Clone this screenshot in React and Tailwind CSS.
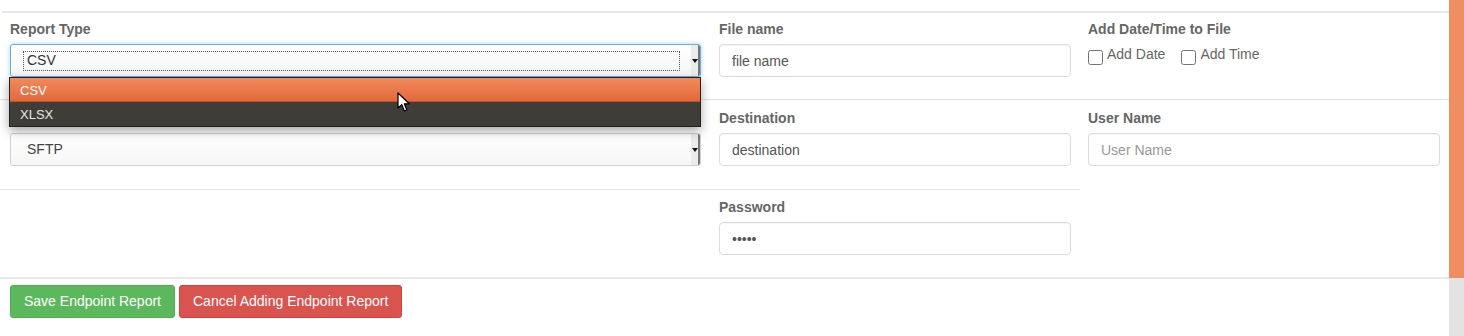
import { useState } from 'react'

function Label({ children }) {
  return <div className="h-5 mb-[5px] text-[14px] leading-5 font-bold text-[#666]">{children}</div>
}

function TextInput({ value, placeholder, type = 'text' }) {
  return (
    <input
      type={type}
      defaultValue={value}
      placeholder={placeholder}
      className="w-full h-[33px] px-3 rounded border border-[#dcdcdc] bg-white text-[14px] text-[#555] placeholder:text-[#999] outline-none shadow-[inset_0_1px_1px_rgba(0,0,0,0.04)]"
    />
  )
}

function Arrow() {
  return <div className="w-0 h-0 border-l-[3px] border-r-[3px] border-t-[4px] border-l-transparent border-r-transparent border-t-[#111]" />
}

function FakeSelect({ value, focused, children }) {
  return (
    <div
      className={
        'relative h-[33px] flex items-center rounded-[3px] bg-gradient-to-b from-white to-[#f6f6f6] ' +
        (focused
          ? 'border border-[#66afe9] shadow-[0_0_4px_rgba(102,175,233,0.6)]'
          : 'border border-[#d0d0d0]')
      }
    >
      {focused ? (
        <div className="ml-3 flex-1 mr-[20px] h-[20px] border border-dotted border-[#555] flex items-center pl-[3px] text-[14px] text-[#333]">
          {value}
        </div>
      ) : (
        <div className="ml-4 flex-1 text-[14px] text-[#444]">{value}</div>
      )}
      <div className="absolute right-0 top-0 bottom-0 w-[9px] flex items-center justify-center border-r-2 border-[#777] bg-[#ececec] rounded-r-[2px]">
        <Arrow />
      </div>
      {children}
    </div>
  )
}

function Cursor() {
  return (
    <svg className="absolute z-30 left-[397px] top-[92px]" width="14" height="21" viewBox="0 0 14 21">
      <path d="M1 1 L1 16 L4.8 12.6 L7.3 19 L9.8 18 L7.3 11.8 L12.3 11.8 Z" fill="#fff" stroke="#000" strokeWidth="1.2" strokeLinejoin="round" />
    </svg>
  )
}

export default function App() {
  const [addDate, setAddDate] = useState(false)
  const [addTime, setAddTime] = useState(false)

  return (
    <div className="relative flex w-full h-[336px] bg-white overflow-hidden" style={{ fontFamily: '"Liberation Sans", Arial, sans-serif' }}>
      <div className="flex-1 flex flex-col">
        <div className="h-[11px]" />
        <div className="ml-[2px] border-t-2 border-[#e8e8e8]" />

        {/* Row 1 */}
        <div className="flex pl-[10px] pt-[6px] h-[86px]">
          <div className="w-[691px] relative z-10">
            <Label>Report Type</Label>
            <FakeSelect value="CSV" focused>
              <div className="absolute left-[-2px] right-[-1px] top-[32px] border border-[#222] shadow-[0_4px_10px_rgba(0,0,0,0.35)] text-[13px]">
                <div className="h-[24px] flex items-center pl-[10px] pt-[2px] text-white bg-gradient-to-b from-[#f28a5c] to-[#e3683a] border-b border-[#c0522a]">CSV</div>
                <div className="h-[24px] flex items-center pl-[10px] pt-[1px] text-[#e8e8e8] bg-[#3f3d38]">XLSX</div>
              </div>
            </FakeSelect>
          </div>
          <div className="w-[352px] ml-[18px]">
            <Label>File name</Label>
            <TextInput value="file name" />
          </div>
          <div className="w-[352px] ml-[17px]">
            <Label>Add Date/Time to File</Label>
            <div className="flex items-start gap-[16px] text-[14px] text-[#666] leading-4 mt-0">
              <label className="flex items-start gap-[4px] cursor-pointer">
                <input type="checkbox" checked={addDate} onChange={() => setAddDate(!addDate)} className="mt-[6px] w-[15px] h-[15px] accent-[#888]" />
                <span className="mt-[2px]">Add Date</span>
              </label>
              <label className="flex items-start gap-[4px] cursor-pointer">
                <input type="checkbox" checked={addTime} onChange={() => setAddTime(!addTime)} className="mt-[6px] w-[15px] h-[15px] accent-[#888]" />
                <span className="mt-[2px]">Add Time</span>
              </label>
            </div>
          </div>
        </div>

        <div className="border-t border-[#e3e3e3]" />

        {/* Rows 2 and 3 */}
        <div className="flex">
          <div className="w-[1080px]">
            <div className="flex pl-[10px] pt-[8px] h-[89px]">
              <div className="w-[691px]">
                <div className="h-5 mb-[5px]" />
                <FakeSelect value="SFTP" />
              </div>
              <div className="w-[352px] ml-[18px]">
                <Label>Destination</Label>
                <TextInput value="destination" />
              </div>
            </div>
            <div className="border-t border-[#e3e3e3]" />
            <div className="flex pl-[10px] pt-[7px] h-[87px]">
              <div className="w-[691px]" />
              <div className="w-[352px] ml-[18px]">
                <Label>Password</Label>
                <TextInput type="password" value="admin" />
              </div>
            </div>
          </div>
          <div className="w-[352px] ml-[8px] pt-[8px]">
            <Label>User Name</Label>
            <TextInput placeholder="User Name" />
          </div>
        </div>

        <div className="border-t-2 border-[#e8e8e8]" />

        <div className="flex gap-[4px] pl-[10px] pt-[6px]">
          <button className="h-[33px] px-[13px] rounded-[3px] bg-[#5cb85c] border border-[#4cae4c] text-white text-[14px]">Save Endpoint Report</button>
          <button className="h-[33px] px-[13px] rounded-[3px] bg-[#d9534f] border border-[#d43f3a] text-white text-[14px]">Cancel Adding Endpoint Report</button>
        </div>
      </div>

      <div className="w-[15px] flex flex-col">
        <div className="h-[278px] bg-[#ef8d63]" />
        <div className="flex-1 bg-[#e3e3e3]" />
      </div>

      <Cursor />
    </div>
  )
}
